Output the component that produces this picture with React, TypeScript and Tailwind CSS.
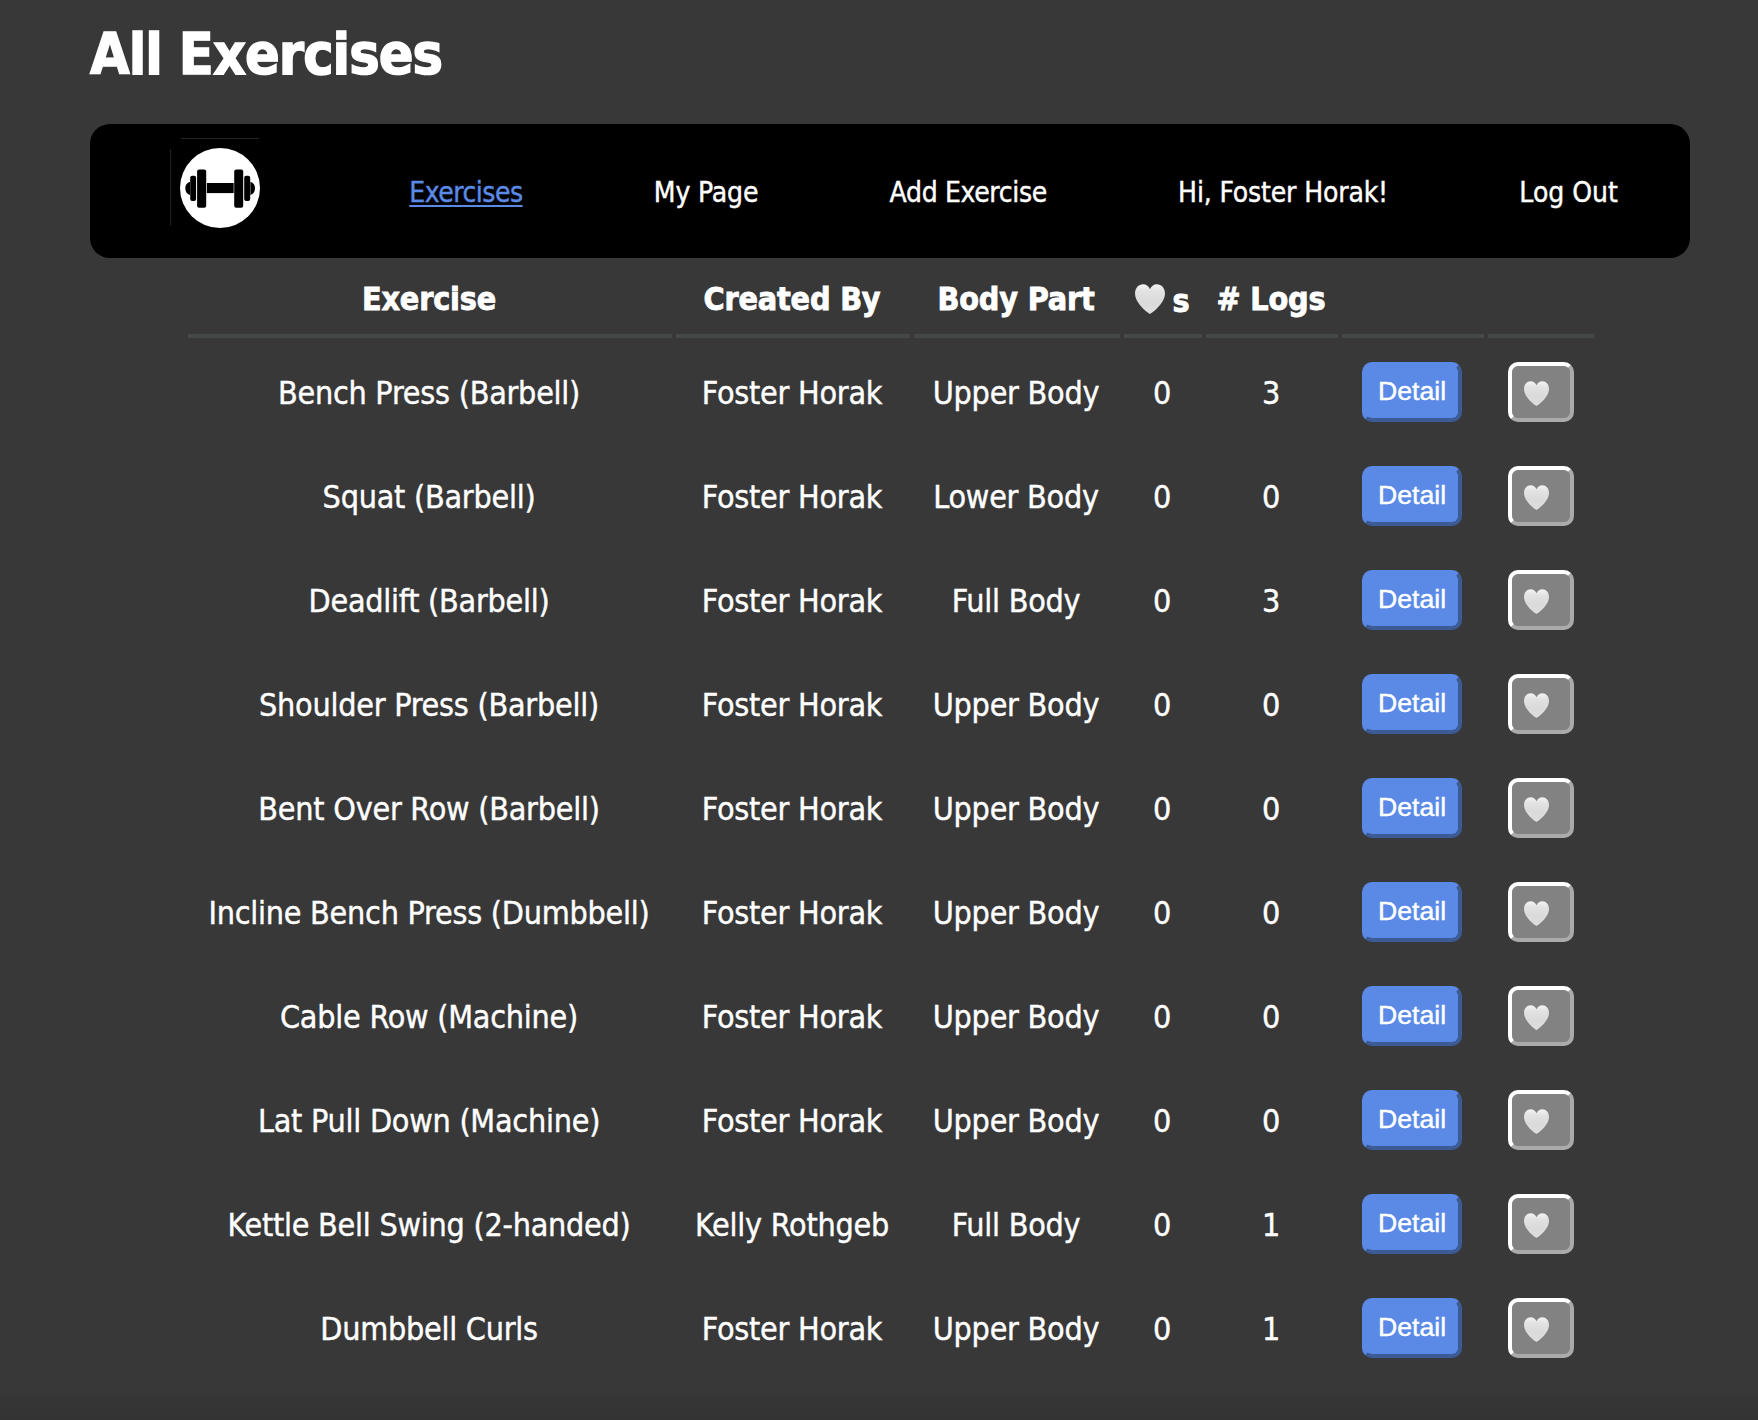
import type { ReactNode } from 'react';

type Exercise = { name: string; by: string; part: string; likes: number; logs: number };

const exercises: Exercise[] = [
  { name: 'Bench Press (Barbell)', by: 'Foster Horak', part: 'Upper Body', likes: 0, logs: 3 },
  { name: 'Squat (Barbell)', by: 'Foster Horak', part: 'Lower Body', likes: 0, logs: 0 },
  { name: 'Deadlift (Barbell)', by: 'Foster Horak', part: 'Full Body', likes: 0, logs: 3 },
  { name: 'Shoulder Press (Barbell)', by: 'Foster Horak', part: 'Upper Body', likes: 0, logs: 0 },
  { name: 'Bent Over Row (Barbell)', by: 'Foster Horak', part: 'Upper Body', likes: 0, logs: 0 },
  { name: 'Incline Bench Press (Dumbbell)', by: 'Foster Horak', part: 'Upper Body', likes: 0, logs: 0 },
  { name: 'Cable Row (Machine)', by: 'Foster Horak', part: 'Upper Body', likes: 0, logs: 0 },
  { name: 'Lat Pull Down (Machine)', by: 'Foster Horak', part: 'Upper Body', likes: 0, logs: 0 },
  { name: 'Kettle Bell Swing (2-handed)', by: 'Kelly Rothgeb', part: 'Full Body', likes: 0, logs: 1 },
  { name: 'Dumbbell Curls', by: 'Foster Horak', part: 'Upper Body', likes: 0, logs: 1 },
];

const columns = 'grid grid-cols-[484px_234px_206px_78px_132px_142px_106px] gap-x-1';

function Heart({ className }: { className: string }) {
  return (
    <svg viewBox="0 0 30 30" className={className} aria-label="heart">
      <defs>
        <linearGradient id="heart-fill" x1="0" y1="0" x2="0" y2="1">
          <stop offset="0" stopColor="#f4f4f4" />
          <stop offset="0.25" stopColor="#e2e2e2" />
          <stop offset="0.6" stopColor="#dadada" />
          <stop offset="1" stopColor="#dedede" />
        </linearGradient>
      </defs>
      <path
        fill="url(#heart-fill)"
        d="M15 29.9C14.2 29.9 0 20 0 9.3C0 4 3.6.2 8 .2C11.3.2 13.9 2.2 15 5.2C16.1 2.2 18.7.2 22 .2C26.4.2 30 4 30 9.3C30 20 15.8 29.9 15 29.9Z"
      />
    </svg>
  );
}

function Logo() {
  return (
    <svg viewBox="0 0 109 100" className="h-[100px] w-[109px] shrink-0" aria-label="Dumbbell logo">
      <path d="M11 .5H89M.7 11V88" stroke="#242424" strokeWidth="1" fill="none" />
      <circle cx="50" cy="50" r="40" fill="#fff" />
      <g fill="#000">
        <path d="M20 43.8C16.8 44.8 15.3 47 15.3 50.3C15.3 53.6 16.8 56 20 57ZM80.4 43.8C83.6 44.8 85 47 85 50.3C85 53.6 83.6 56 80.4 57Z" />
        <rect x="20.2" y="37.7" width="5.9" height="25.3" rx="2" />
        <rect x="27.1" y="31.4" width="9.1" height="38.4" rx="2" />
        <rect x="36.9" y="45" width="26.8" height="10.1" />
        <rect x="64.2" y="31.4" width="9" height="38.4" rx="2" />
        <rect x="74.2" y="37.7" width="6" height="25.3" rx="2" />
      </g>
    </svg>
  );
}

function Nav() {
  return (
    <nav className="flex h-[134px] items-start justify-between rounded-[20px] bg-black pt-[14px] pr-[72px] pl-20 text-[28px] leading-[34px] whitespace-nowrap [-webkit-text-stroke:0.4px]">
      <Logo />
      <a className="mt-[38px] -ml-[132px] pl-[131px] -tracking-[0.5px] text-[#5b8ae6] underline decoration-2 underline-offset-[3px]">Exercises</a>
      <a className="mt-[38px] -tracking-[0.15px]">My Page</a>
      <a className="mt-[38px] -tracking-[0.35px]">Add Exercise</a>
      <a className="mt-[38px] -tracking-[0.15px]">Hi, Foster Horak!</a>
      <a className="mt-[38px]">Log Out</a>
    </nav>
  );
}

function HeaderCell({ children }: { children?: ReactNode }) {
  return <div className="flex items-center justify-center border-b-4 border-[#434748] pt-[6px] pr-0.5">{children}</div>;
}

function Row({ exercise }: { exercise: Exercise }) {
  return (
    <div className={`${columns} h-[104px] items-center text-center -tracking-[0.25px] [-webkit-text-stroke:0.4px]`}>
      <div className="pt-0.5 pr-0.5">{exercise.name}</div>
      <div className="pt-0.5 pr-0.5">{exercise.by}</div>
      <div className="pt-0.5 pr-0.5">{exercise.part}</div>
      <div className="pt-0.5 pr-0.5">{exercise.likes}</div>
      <div className="pt-0.5 pr-0.5">{exercise.logs}</div>
      <div className="pl-5">
        <button className="flex h-[60px] w-[100px] items-center justify-center rounded-[10px] border-4 border-t-[#5b8ae6] border-r-[#3b5a96] border-b-[#3b5a96] border-l-[#5b8ae6] bg-[#5b8ae6] pb-0.5 font-['Liberation_Sans',Arial,sans-serif] text-[26.67px] tracking-normal">
          Detail
        </button>
      </div>
      <div className="pl-5">
        <button className="flex h-[60px] w-[66px] items-start rounded-[10px] border-4 border-t-white border-r-[#aaaaaa] border-b-[#aaaaaa] border-l-white bg-[#828282] pt-[15px] pl-3">
          <Heart className="size-[25px]" />
        </button>
      </div>
    </div>
  );
}

export default function App() {
  return (
    <div className="flex h-[1420px] w-[1758px] flex-col bg-[#383838] font-['DejaVu_Sans_Condensed','DejaVu_Sans',sans-serif] text-white">
      <main className="mr-[68px] ml-[90px] grow pt-[22px]">
        <h1 className="mb-[38px] text-[57px] leading-[64px] font-bold -tracking-[0.96px] [-webkit-text-stroke:1.4px]">All Exercises</h1>
        <Nav />
        <div className="ml-[98px] text-[32px] leading-[38px] whitespace-nowrap">
          <div className={`${columns} mb-0.5 h-20 font-bold -tracking-[0.2px] [-webkit-text-stroke:0.8px]`}>
            <HeaderCell>Exercise</HeaderCell>
            <HeaderCell>Created By</HeaderCell>
            <HeaderCell>Body Part</HeaderCell>
            <HeaderCell>
              <span className="flex items-center gap-2">
                <Heart className="size-[30px]" />
                <span className="pt-1">s</span>
              </span>
            </HeaderCell>
            <HeaderCell># Logs</HeaderCell>
            <HeaderCell />
            <HeaderCell />
          </div>
          {exercises.map((exercise) => (
            <Row key={exercise.name} exercise={exercise} />
          ))}
        </div>
      </main>
      <div className="h-[27px] bg-linear-to-b from-[#363636] to-[#333333]" />
    </div>
  );
}
